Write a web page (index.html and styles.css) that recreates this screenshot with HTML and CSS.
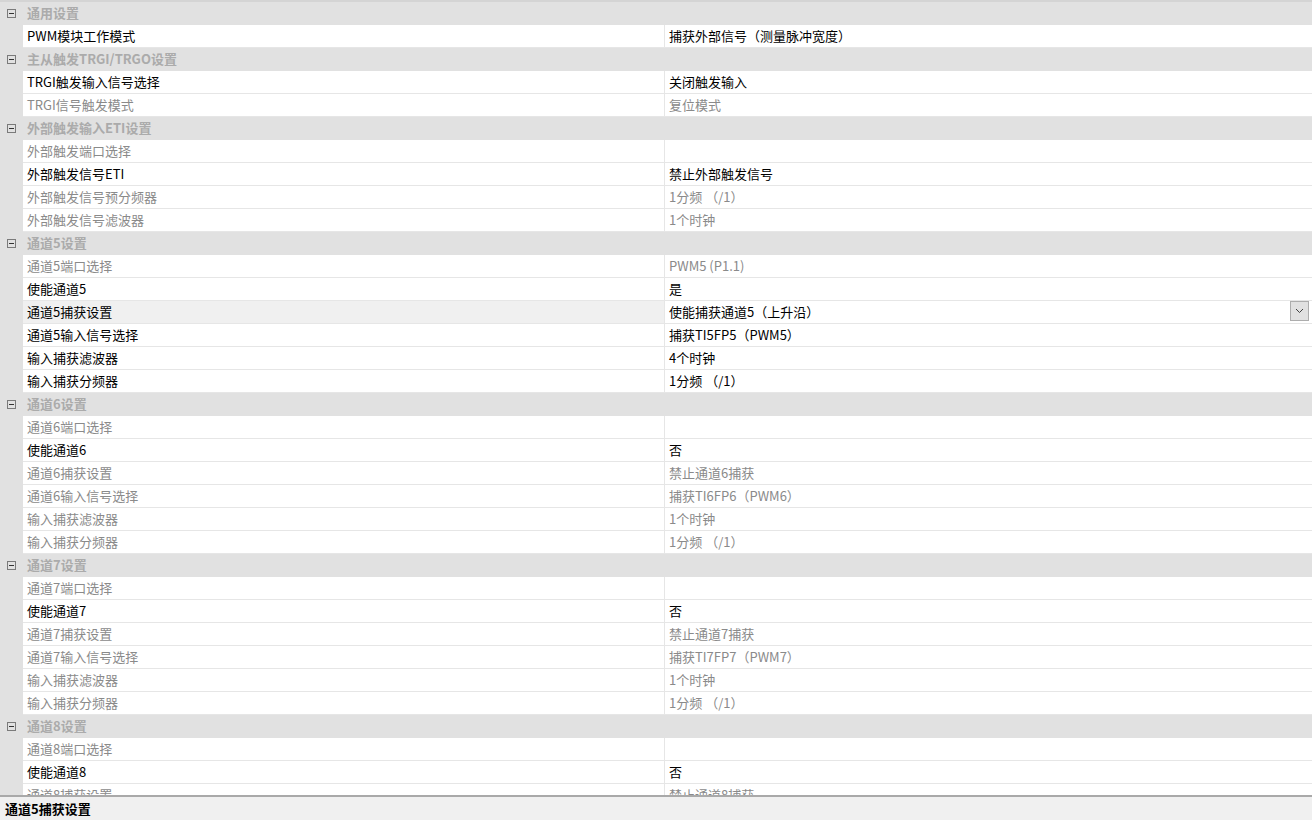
FILE: index.html
```html
<!DOCTYPE html>
<html>
<head>
<meta charset="utf-8">
<link rel="stylesheet" href="styles.css">
</head>
<body>
<div class="props">
    <div class="group"><span class="gutter"><i class="fold"></i></span><span class="title">通用设置</span></div>
    <div class="row"><span class="gutter"></span><span class="name">PWM模块工作模式</span><span class="value">捕获外部信号（测量脉冲宽度）</span></div>

    <div class="group"><span class="gutter"><i class="fold"></i></span><span class="title">主从触发TRGI/TRGO设置</span></div>
    <div class="row"><span class="gutter"></span><span class="name">TRGI触发输入信号选择</span><span class="value">关闭触发输入</span></div>
    <div class="row off"><span class="gutter"></span><span class="name">TRGI信号触发模式</span><span class="value">复位模式</span></div>

    <div class="group"><span class="gutter"><i class="fold"></i></span><span class="title">外部触发输入ETI设置</span></div>
    <div class="row off"><span class="gutter"></span><span class="name">外部触发端口选择</span><span class="value"></span></div>
    <div class="row"><span class="gutter"></span><span class="name">外部触发信号ETI</span><span class="value">禁止外部触发信号</span></div>
    <div class="row off"><span class="gutter"></span><span class="name">外部触发信号预分频器</span><span class="value">1分频 （/1）</span></div>
    <div class="row off"><span class="gutter"></span><span class="name">外部触发信号滤波器</span><span class="value">1个时钟</span></div>

    <div class="group"><span class="gutter"><i class="fold"></i></span><span class="title">通道5设置</span></div>
    <div class="row off"><span class="gutter"></span><span class="name">通道5端口选择</span><span class="value">PWM5 (P1.1)</span></div>
    <div class="row"><span class="gutter"></span><span class="name">使能通道5</span><span class="value">是</span></div>
    <div class="row selected"><span class="gutter"></span><span class="name">通道5捕获设置</span><span class="value combo">使能捕获通道5（上升沿）<span class="drop"><svg width="9" height="6" viewBox="0 0 9 6"><path d="M1 1 L4.5 4.5 L8 1" fill="none" stroke="#404040" stroke-width="1"/></svg></span></span></div>
    <div class="row"><span class="gutter"></span><span class="name">通道5输入信号选择</span><span class="value">捕获TI5FP5（PWM5）</span></div>
    <div class="row"><span class="gutter"></span><span class="name">输入捕获滤波器</span><span class="value">4个时钟</span></div>
    <div class="row"><span class="gutter"></span><span class="name">输入捕获分频器</span><span class="value">1分频 （/1）</span></div>

    <div class="group"><span class="gutter"><i class="fold"></i></span><span class="title">通道6设置</span></div>
    <div class="row off"><span class="gutter"></span><span class="name">通道6端口选择</span><span class="value"></span></div>
    <div class="row"><span class="gutter"></span><span class="name">使能通道6</span><span class="value">否</span></div>
    <div class="row off"><span class="gutter"></span><span class="name">通道6捕获设置</span><span class="value">禁止通道6捕获</span></div>
    <div class="row off"><span class="gutter"></span><span class="name">通道6输入信号选择</span><span class="value">捕获TI6FP6（PWM6）</span></div>
    <div class="row off"><span class="gutter"></span><span class="name">输入捕获滤波器</span><span class="value">1个时钟</span></div>
    <div class="row off"><span class="gutter"></span><span class="name">输入捕获分频器</span><span class="value">1分频 （/1）</span></div>

    <div class="group"><span class="gutter"><i class="fold"></i></span><span class="title">通道7设置</span></div>
    <div class="row off"><span class="gutter"></span><span class="name">通道7端口选择</span><span class="value"></span></div>
    <div class="row"><span class="gutter"></span><span class="name">使能通道7</span><span class="value">否</span></div>
    <div class="row off"><span class="gutter"></span><span class="name">通道7捕获设置</span><span class="value">禁止通道7捕获</span></div>
    <div class="row off"><span class="gutter"></span><span class="name">通道7输入信号选择</span><span class="value">捕获TI7FP7（PWM7）</span></div>
    <div class="row off"><span class="gutter"></span><span class="name">输入捕获滤波器</span><span class="value">1个时钟</span></div>
    <div class="row off"><span class="gutter"></span><span class="name">输入捕获分频器</span><span class="value">1分频 （/1）</span></div>

    <div class="group"><span class="gutter"><i class="fold"></i></span><span class="title">通道8设置</span></div>
    <div class="row off"><span class="gutter"></span><span class="name">通道8端口选择</span><span class="value"></span></div>
    <div class="row"><span class="gutter"></span><span class="name">使能通道8</span><span class="value">否</span></div>
    <div class="row off"><span class="gutter"></span><span class="name">通道8捕获设置</span><span class="value">禁止通道8捕获</span></div>
    <div class="row off"><span class="gutter"></span><span class="name">通道8输入信号选择</span><span class="value">捕获TI8FP8（PWM8）</span></div>
</div>
<div class="status">通道5捕获设置</div>
</body>
</html>
```

FILE: styles.css
```css
html, body {
    margin: 0;
    height: 100%;
    overflow: hidden;
}

body {
    display: flex;
    flex-direction: column;
    background-color: #f0f0f0;
    font-family: "Noto Sans CJK SC", "Noto Sans", sans-serif;
    font-size: 13px;
    color: #000;
}

.props {
    height: 793px;
    flex-shrink: 0;
    overflow: hidden;
    background-color: #fff;
    border-top: 2px solid #d4d4d4;
}

.group, .row {
    display: grid;
    grid-template-columns: 23px 641px 1fr;
    height: 23px;
    line-height: 22px;
    white-space: nowrap;
}

.gutter {
    background-color: #e1e1e1;
    display: flex;
    align-items: center;
    justify-content: center;
}

.group {
    background-color: #e1e1e1;
}

.group .title {
    grid-column: 2 / 4;
    padding-left: 4px;
    font-weight: bold;
    color: #ababab;
}

.fold {
    display: block;
    width: 9px;
    height: 9px;
    margin: 0 1px 1px 0;
    border: 1px solid #7a7a7a;
    box-sizing: border-box;
    position: relative;
}

.fold::after {
    content: "";
    position: absolute;
    left: 1px;
    right: 1px;
    top: 3px;
    height: 1px;
    background-color: #333;
}

.row .name, .row .value {
    padding-left: 4px;
    border-bottom: 1px solid #e6e6e6;
    overflow: hidden;
}

.row .value {
    border-left: 1px solid #e6e6e6;
}

.row.off .name, .row.off .value {
    color: #8a8a8a;
}

.row.selected .name {
    background-color: #f0f0f0;
}

.combo {
    position: relative;
}

.drop {
    position: absolute;
    right: 3px;
    top: 0;
    width: 19px;
    height: 20px;
    box-sizing: border-box;
    border: 1px solid #adadad;
    background-color: #e1e1e1;
    display: flex;
    align-items: center;
    justify-content: center;
}

.status {
    flex: 1;
    border-top: 2px solid #a9a9a9;
    padding: 2px 5px 0;
    font-weight: bold;
    line-height: 20px;
}
```
